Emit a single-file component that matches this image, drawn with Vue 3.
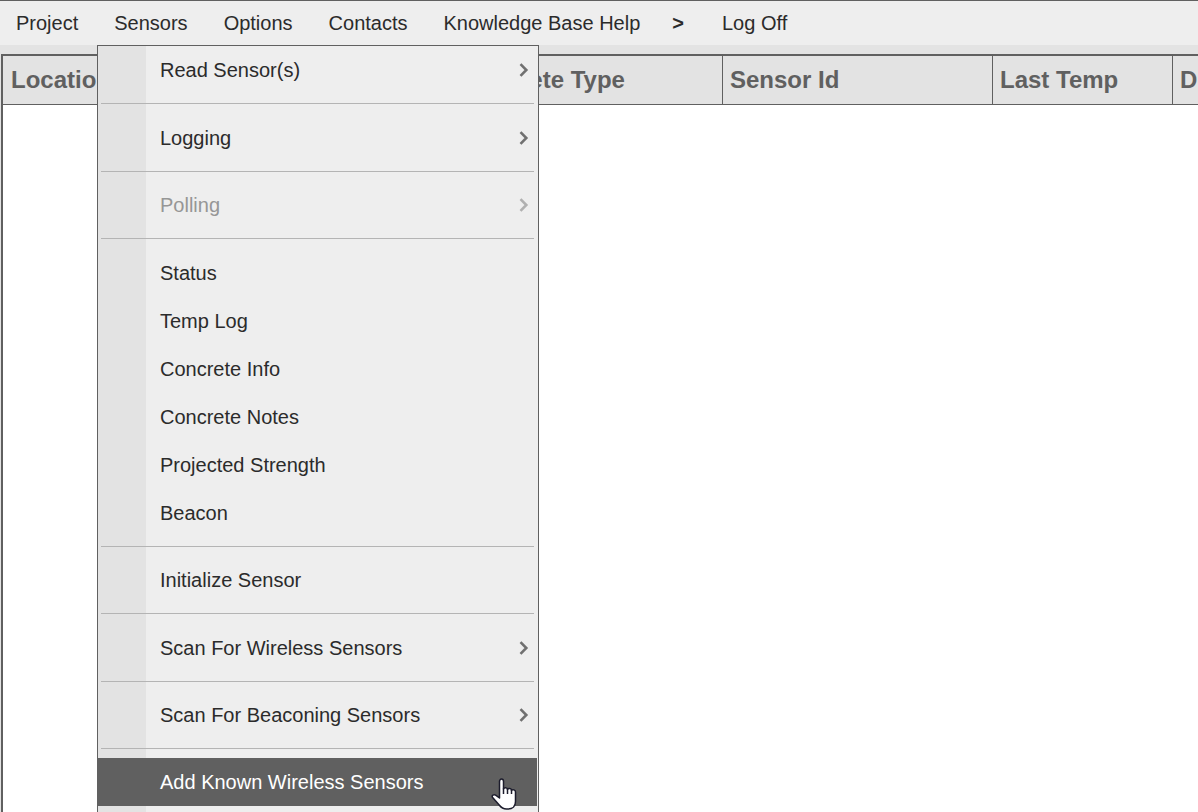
<script setup>
const navItems = ['Project', 'Sensors', 'Options', 'Contacts', 'Knowledge Base Help', '>', 'Log Off']

const groups = [
  [{ label: 'Read Sensor(s)', sub: true }],
  [{ label: 'Logging', sub: true }],
  [{ label: 'Polling', sub: true, disabled: true }],
  [
    { label: 'Status' },
    { label: 'Temp Log' },
    { label: 'Concrete Info' },
    { label: 'Concrete Notes' },
    { label: 'Projected Strength' },
    { label: 'Beacon' },
  ],
  [{ label: 'Initialize Sensor' }],
  [{ label: 'Scan For Wireless Sensors', sub: true }],
  [{ label: 'Scan For Beaconing Sensors', sub: true }],
  [{ label: 'Add Known Wireless Sensors', active: true }],
]

const columns = [
  { label: 'Location', size: 'wide' },
  { label: 'Concrete Type', size: 'medium' },
  { label: 'Sensor Id', size: 'medium' },
  { label: 'Last Temp', size: 'narrow' },
  { label: 'D', size: 'rest' },
]
</script>

<template>
  <div class="page">
    <nav class="nav">
      <button v-for="item in navItems" :key="item" type="button" class="nav-item" :class="{ more: item === '>' }">{{ item }}</button>
    </nav>

    <main class="grid">
      <table class="table">
        <thead>
          <tr>
            <th v-for="col in columns" :key="col.label" :class="col.size" scope="col">{{ col.label }}</th>
          </tr>
        </thead>
      </table>
    </main>

    <div class="menu" role="menu">
      <div v-for="(group, i) in groups" :key="i" class="group">
        <button
          v-for="entry in group"
          :key="entry.label"
          type="button"
          role="menuitem"
          class="entry"
          :class="{ active: entry.active }"
          :disabled="entry.disabled"
        >
          <span>{{ entry.label }}</span>
          <svg v-if="entry.sub" class="chevron" viewBox="0 0 10 14" aria-hidden="true">
            <path d="M1.5 1.2 7.3 7 1.5 12.8" />
          </svg>
        </button>
      </div>
    </div>

    <svg class="pointer" viewBox="0 0 26 32" aria-hidden="true">
      <path
        d="M8.5 20V3.4C8.5 .3 12.5 .3 12.5 3.4V11C13.2 9.2 16.3 9.4 16.5 11.4C17.5 9.9 20.3 10.4 20.5 12.3C21.7 11.1 24.5 11.7 24.5 14V23.5C24.5 28 21.7 31 17 31H15.5C12.3 31 10 29.4 8.2 27L1.4 19.3C.5 17.3 2.8 16.2 4.6 17.2Z"
      />
      <path d="M12.5 10.5V16M16.5 11V16M20.5 12V16" />
    </svg>
  </div>
</template>

<style>
body {
  margin: 0;
  background: #fff;
}
</style>

<style scoped>
.page {
  position: relative;
  display: flex;
  flex-direction: column;
  height: 100vh;
  overflow: hidden;
  background: #e3e3e3;
  font-family: "Liberation Sans", Arial, sans-serif;
  font-size: 20px;
  color: #2b2b2b;
}

button {
  margin: 0;
  border: 0;
  background: none;
  font: inherit;
  color: inherit;
}

.nav {
  display: flex;
  flex: none;
  height: 44px;
  border-top: 1px solid #606060;
  background: #eee;
}

.nav-item {
  padding: 0 18px;
  white-space: nowrap;
}

.nav-item:first-child {
  padding-left: 16px;
}

.more {
  padding: 0 20px 0 14px;
  font-weight: bold;
}

.grid {
  flex: 1;
  margin: 9px 0 0 1px;
  border-top: 2px solid #606060;
  border-left: 2px solid #606060;
  background: #fff;
}

.table {
  width: 100%;
  table-layout: fixed;
  border-spacing: 0;
}

th {
  box-sizing: border-box;
  height: 49px;
  padding: 0 0 0 7px;
  border-right: 1px solid #606060;
  border-bottom: 1px solid #606060;
  background: #e3e3e3;
  color: #606060;
  font-size: 24px;
  line-height: 28px;
  text-align: left;
  white-space: nowrap;
  overflow: hidden;
}

.wide {
  width: 450px;
  padding-left: 8px;
}

.medium {
  width: 270px;
}

.narrow {
  width: 180px;
}

.rest {
  border-right: 0;
}

.menu {
  position: absolute;
  top: 45px;
  left: 97px;
  box-sizing: border-box;
  width: 442px;
  padding-bottom: 48px;
  border: 1px solid #606060;
  background: linear-gradient(to right, #e3e3e3 48px, #eee 48px);
}

.group {
  display: flex;
  flex-direction: column;
}

.group:not(:last-child)::after {
  content: "";
  height: 1px;
  margin: 9px 4px 9px 3px;
  background: #b4b4b4;
}

.group:nth-child(odd):not(:nth-child(7))::after {
  margin-bottom: 10px;
}

.entry {
  display: flex;
  align-items: center;
  justify-content: space-between;
  height: 48px;
  margin-right: 1px;
  padding: 0 8px 0 62px;
  text-align: left;
  white-space: nowrap;
}

.entry:disabled {
  color: #969696;
}

.active {
  background: #606060;
  color: #fff;
}

.chevron {
  width: 10px;
  height: 14px;
  fill: none;
  stroke: #707070;
  stroke-width: 2.6;
}

.entry:disabled .chevron {
  stroke: #b0b0b0;
}

.pointer {
  position: absolute;
  top: 778px;
  left: 491px;
  width: 26px;
  height: 32px;
  fill: #fff;
  stroke: #1c1c2c;
  stroke-width: 1.5;
  stroke-linejoin: round;
}
</style>
